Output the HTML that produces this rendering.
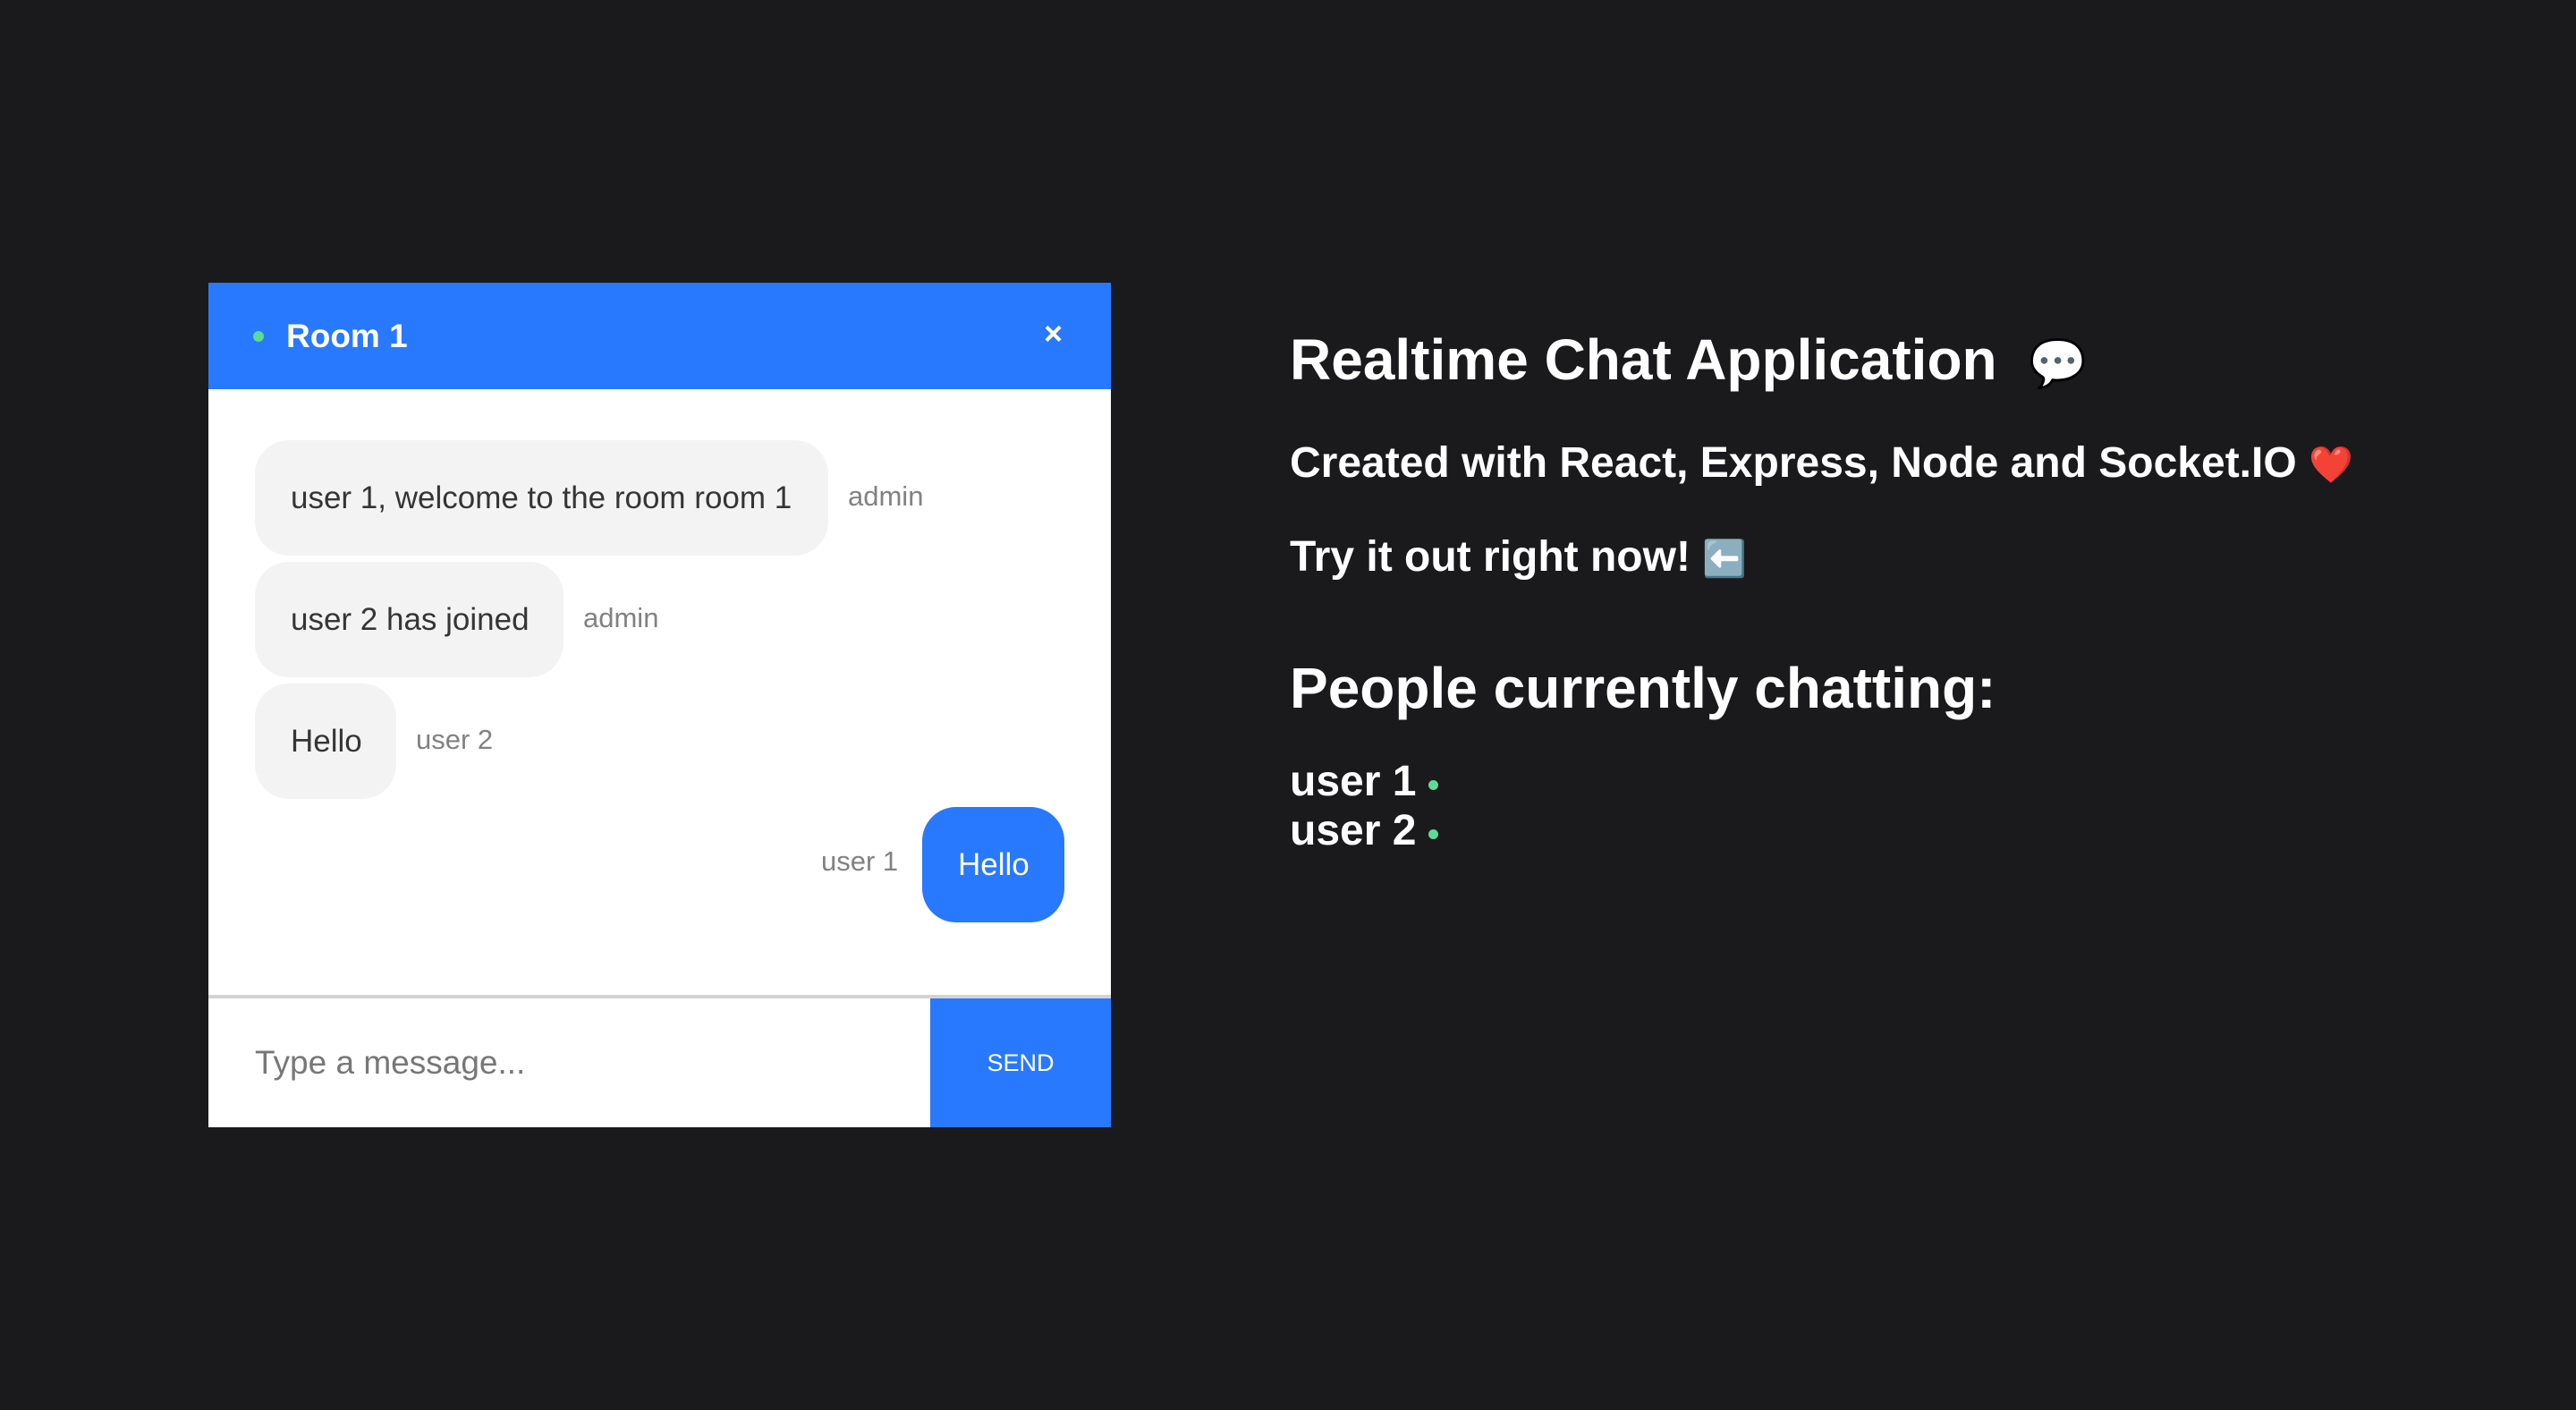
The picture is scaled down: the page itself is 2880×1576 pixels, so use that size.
<!DOCTYPE html>
<html><head><meta charset="utf-8"><style>
*{margin:0;padding:0;box-sizing:border-box}
body{width:2880px;height:1576px;background:#1a1a1d;font-family:"Liberation Sans",Arial,sans-serif;position:relative;overflow:hidden}
.box{position:absolute;left:233px;top:316px;width:1009px;height:944px;background:#fff}
.hdr{position:absolute;left:0;top:0;width:100%;height:119px;background:#2979ff;color:#fff}
.dot{position:absolute;width:12px;height:12px;border-radius:50%;background:#5cdb95}
.hdr .t{position:absolute;left:87px;top:40px;font-size:37px;font-weight:bold;line-height:40px}
.hdr .x{position:absolute;left:934px;top:36px;font-size:36px;font-weight:bold}
.b{position:absolute;background:#f3f3f3;border-radius:38px;color:#353535;font-size:35px;line-height:129px;padding-left:40px;height:129px;white-space:nowrap}
.m{position:absolute;color:#828282;font-size:31px;line-height:129px;height:129px}
.blue{background:#2979ff;color:#fff}
.sep{position:absolute;left:0;top:796px;width:100%;height:4px;background:#d3d3d3}
.inp{position:absolute;left:52px;top:800px;height:144px;line-height:144px;font-size:37px;color:#777}
.send{position:absolute;left:807px;top:800px;width:202px;height:144px;background:#2979ff;color:#fff;font-size:27px;line-height:144px;text-align:center}
.r{position:absolute;left:1442px;color:#fff;font-weight:bold;white-space:nowrap}
</style></head><body>
<div class="box">
 <div class="hdr"><div class="dot" style="left:50px;top:54px"></div><div class="t">Room 1</div><div class="x">×</div></div>
 <div class="b" style="left:52px;top:176px;width:641px">user 1, welcome to the room room 1</div>
 <div class="m" style="left:715px;top:174px">admin</div>
 <div class="b" style="left:52px;top:312px;width:345px">user 2 has joined</div>
 <div class="m" style="left:419px;top:310px">admin</div>
 <div class="b" style="left:52px;top:448px;width:158px">Hello</div>
 <div class="m" style="left:232px;top:446px">user 2</div>
 <div class="m" style="left:685px;top:582px">user 1</div>
 <div class="b blue" style="left:798px;top:586px;width:159px;padding-left:40px">Hello</div>
 <div class="sep"></div>
 <div class="inp">Type a message...</div>
 <div class="send">SEND</div>
</div>
<div class="r" style="top:366px;font-size:64px;line-height:72px">Realtime Chat Application&nbsp; <span style="font-size:52px">💬</span></div>
<div class="r" style="top:490px;font-size:48px;line-height:56px">Created with React, Express, Node and Socket.IO <span style="font-size:40px;color:#e22">❤️</span></div>
<div class="r" style="top:595px;font-size:48px;line-height:56px">Try it out right now! <span style="font-size:40px">⬅️</span></div>
<div class="r" style="top:733px;font-size:64px;line-height:72px">People currently chatting:</div>
<div class="r" style="top:846px;font-size:48px;line-height:55px">user 1 <span class="dot" style="position:relative;display:inline-block;top:-6px;width:11px;height:11px"></span><br>user 2 <span class="dot" style="position:relative;display:inline-block;top:-6px;width:11px;height:11px"></span></div>
</body></html>
